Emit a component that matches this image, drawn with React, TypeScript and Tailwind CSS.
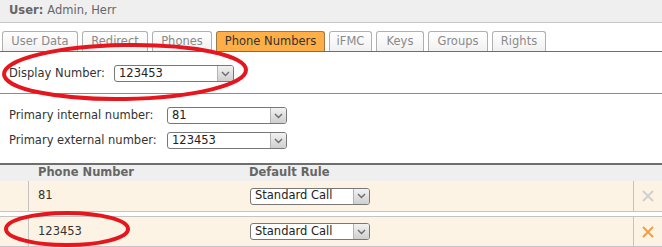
import React from "react";

const font = { fontFamily: '"DejaVu Sans", Verdana, sans-serif' };

function Chevron() {
  return (
    <svg width="9" height="6" viewBox="0 0 9 6" className="block">
      <path d="M1 1 L4.5 4.5 L8 1" fill="none" stroke="#6b6b6b" strokeWidth="1.4" />
    </svg>
  );
}

function Select({ value, w = "w-[120px]" }: { value: string; w?: string }) {
  return (
    <div className={`flex h-[17px] ${w} items-stretch overflow-hidden rounded-[3px] border border-[#787878] bg-white`}>
      <div className="flex flex-1 items-center pl-[4px] text-[11.5px] leading-none text-[#222]">{value}</div>
      <div className="flex w-[16px] items-center justify-center border-l border-[#b4b4b4] bg-gradient-to-b from-[#f2f2f2] to-[#cfcfcf]">
        <Chevron />
      </div>
    </div>
  );
}

function XIcon({ color }: { color: string }) {
  return (
    <svg width="12" height="12" viewBox="0 0 12 12">
      <path d="M1 1 L11 11 M11 1 L1 11" stroke={color} strokeWidth="1.8" />
    </svg>
  );
}

const tabs: { label: string; w: string; active?: boolean }[] = [
  { label: "User Data", w: "w-[76px]" },
  { label: "Redirect", w: "w-[66px]" },
  { label: "Phones", w: "w-[60px]" },
  { label: "Phone Numbers", w: "w-[109px]", active: true },
  { label: "iFMC", w: "w-[43px]" },
  { label: "Keys", w: "w-[48px]" },
  { label: "Groups", w: "w-[60px]" },
  { label: "Rights", w: "w-[54px]" },
];

export default function App() {
  return (
    <div className="relative h-[247px] w-[662px] overflow-hidden bg-white text-[11.5px] text-[#333]" style={font}>
      {/* header */}
      <div className="flex h-[23px] items-center border-b border-[#c6c6c6] bg-[#efefef] pl-[9px] text-[#666]">
        <span className="font-bold">User:</span>
        <span className="ml-[4px]">Admin, Herr</span>
      </div>

      {/* tabs */}
      <div className="mt-[8px] flex h-[21px] items-end gap-[4px] border-b border-[#6e6e6e] pl-[2px]">
        {tabs.map((t) => (
          <div
            key={t.label}
            className={`flex h-[20px] ${t.w} items-center justify-center rounded-t-[3px] border border-b-0 ${
              t.active
                ? "border-[#9a7a4a] bg-[#ffaf46] text-[#333]"
                : "border-[#b0b0b0] bg-gradient-to-b from-white to-[#f1f1f1] text-[#8a8a8a]"
            }`}
          >
            {t.label}
          </div>
        ))}
      </div>

      {/* display number */}
      <div className="flex h-[42px] items-center border-b border-[#8c8c8c] pl-[9px] pt-[2px]">
        <span className="w-[105px]">Display Number:</span>
        <Select value="123453" />
      </div>

      {/* primary numbers */}
      <div className="flex flex-col gap-[8px] pl-[9px] pt-[13px]">
        <div className="flex h-[17px] items-center">
          <span className="w-[158px]">Primary internal number:</span>
          <Select value="81" />
        </div>
        <div className="flex h-[17px] items-center">
          <span className="w-[158px]">Primary external number:</span>
          <Select value="123453" />
        </div>
      </div>

      {/* table */}
      <div className="mt-[14px] border-t-2 border-[#6e6e6e]">
        <div className="flex h-[16px] items-center bg-[#efefef] font-bold text-[#666]">
          <div className="w-[38px]" />
          <div className="w-[211px]">Phone Number</div>
          <div>Default Rule</div>
        </div>
        <div className="flex h-[31px] border-b border-[#c4c4c4] bg-[#fcf3e4]">
          <div className="w-[29px] border-r border-[#c4c4c4]" />
          <div className="flex w-[220px] items-center pl-[9px]">81</div>
          <div className="flex w-[384px] items-center pl-[1px]">
            <Select value="Standard Call" />
          </div>
          <div className="flex flex-1 items-center justify-center border-l border-[#c4c4c4]">
            <XIcon color="#cfcfcf" />
          </div>
        </div>
        <div className="h-[4px]" />
        <div className="flex h-[31px] border-y border-[#c4c4c4] bg-[#fcf3e4]">
          <div className="w-[29px] border-r border-[#c4c4c4]" />
          <div className="flex w-[220px] items-center pl-[9px]">123453</div>
          <div className="flex w-[384px] items-center pl-[1px]">
            <Select value="Standard Call" />
          </div>
          <div className="flex flex-1 items-center justify-center border-l border-[#c4c4c4]">
            <XIcon color="#f59a3c" />
          </div>
        </div>
      </div>

      {/* red annotation ellipses */}
      <svg className="pointer-events-none absolute left-0 top-0" width="662" height="247" viewBox="0 0 662 247">
        <ellipse cx="125" cy="72" rx="121" ry="27" fill="none" stroke="#e5161e" strokeWidth="4" transform="rotate(-1 125 72)" />
        <ellipse cx="67" cy="229" rx="61" ry="16" fill="none" stroke="#e5161e" strokeWidth="4" />
      </svg>
    </div>
  );
}
